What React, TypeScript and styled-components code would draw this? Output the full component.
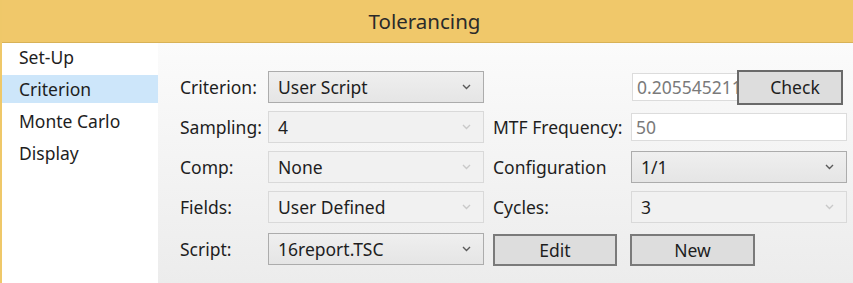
import styled, { createGlobalStyle } from 'styled-components'

const GlobalStyle = createGlobalStyle`
  html, body {
    margin: 0;
    padding: 0;
    background: #ffffff;
  }
  body {
    font-family: "Noto Sans", "Open Sans", sans-serif;
    color: #1e1e1e;
  }
`

const Window = styled.div`
  width: 853px;
  height: 283px;
  display: flex;
  flex-direction: column;
  overflow: hidden;
  border-left: 2px solid #efc869;
  box-sizing: border-box;
`

const TitleBar = styled.div`
  height: 42px;
  flex: none;
  display: flex;
  align-items: center;
  justify-content: center;
  background: #f0c86a;
  border-bottom: 1px solid #d8b257;
  font-size: 20.5px;
  color: #2a2a2a;
  padding-right: 6px;
`

const Body = styled.div`
  flex: 1;
  display: flex;
`

const Sidebar = styled.ul`
  width: 156px;
  flex: none;
  margin: 0;
  padding: 0;
  list-style: none;
  background: #ffffff;
`

const NavItem = styled.li<{ $active?: boolean }>`
  height: 28px;
  margin-bottom: 4px;
  padding-left: 17px;
  display: flex;
  align-items: center;
  font-size: 17.5px;
  background: ${p => (p.$active ? '#cde6fa' : 'transparent')};
`

const Panel = styled.div`
  flex: 1;
  background: linear-gradient(#fbfbfb, #ececec);
  padding: 28px 6px 0 22px;
`

const Form = styled.div`
  display: grid;
  grid-template-columns: 88px 216px 147px 216px;
  grid-template-rows: 32px 32px 32px 32px 35px;
  row-gap: 8px;
  align-items: center;
  & > :nth-child(4n + 3) {
    padding-left: 9px;
  }
`

const Label = styled.span`
  font-size: 17.5px;
  white-space: nowrap;
`

const Combo = styled.div<{ $disabled?: boolean }>`
  height: 32px;
  box-sizing: border-box;
  display: flex;
  align-items: center;
  justify-content: space-between;
  padding: 0 12px 0 9px;
  font-size: 17.5px;
  border: 1px solid ${p => (p.$disabled ? '#d9d9d9' : '#acacac')};
  background: ${p => (p.$disabled ? '#f1f1f1' : 'linear-gradient(#efefef, #e5e5e5)')};
  color: #1e1e1e;
`

const Chevron = ({ light }: { light?: boolean }) => (
  <svg width="9" height="6" viewBox="0 0 9 6">
    <path d="M1 1 L4.5 4.5 L8 1" fill="none" stroke={light ? '#c9c9c9' : '#5a5a5a'} strokeWidth="1.4" />
  </svg>
)

const TextBox = styled.div<{ $width?: number }>`
  height: 28px;
  width: ${p => (p.$width ? `${p.$width}px` : '100%')};
  flex: none;
  box-sizing: border-box;
  display: flex;
  align-items: center;
  padding-left: 4px;
  background: #ffffff;
  border: 1px solid #dcdcdc;
  color: #7a7a7a;
  font-size: 17.5px;
  overflow: hidden;
  white-space: nowrap;
`

const CheckRow = styled.div`
  display: flex;
  align-items: center;
  padding-left: 1px;
`

const Button = styled.button<{ $width: number }>`
  width: ${p => p.$width}px;
  height: 32px;
  box-sizing: border-box;
  border: 2px solid #7a7a7a;
  background: #dddddd;
  font-family: inherit;
  font-size: 17.5px;
  color: #1e1e1e;
  padding: 0;
`

const ButtonRow = styled.div`
  display: flex;
  gap: 13px;
  padding-left: 7px;
  margin-top: 2px;
  grid-column: 3 / span 2;
`

const CheckButton = styled(Button)`
  height: 35px;
  flex: none;
  margin-left: -3px;
  padding-left: 10px;
  border-color: #6a6a6a;
`

const sections = ['Set-Up', 'Criterion', 'Monte Carlo', 'Display']

export default function App() {
  return (
    <>
      <GlobalStyle />
      <Window>
        <TitleBar>Tolerancing</TitleBar>
        <Body>
          <Sidebar>
            {sections.map(s => (
              <NavItem key={s} $active={s === 'Criterion'}>{s}</NavItem>
            ))}
          </Sidebar>
          <Panel>
            <Form>
              <Label>Criterion:</Label>
              <Combo>User Script<Chevron /></Combo>
              <span />
              <CheckRow>
                <TextBox $width={108}>0.205545211</TextBox>
                <CheckButton $width={106}>Check</CheckButton>
              </CheckRow>

              <Label>Sampling:</Label>
              <Combo $disabled>4<Chevron light /></Combo>
              <Label>MTF Frequency:</Label>
              <TextBox>50</TextBox>

              <Label>Comp:</Label>
              <Combo $disabled>None<Chevron light /></Combo>
              <Label>Configuration</Label>
              <Combo>1/1<Chevron /></Combo>

              <Label>Fields:</Label>
              <Combo $disabled>User Defined<Chevron light /></Combo>
              <Label>Cycles:</Label>
              <Combo $disabled>3<Chevron light /></Combo>

              <Label>Script:</Label>
              <Combo>16report.TSC<Chevron /></Combo>
              <ButtonRow>
                <Button $width={124}>Edit</Button>
                <Button $width={125}>New</Button>
              </ButtonRow>
            </Form>
          </Panel>
        </Body>
      </Window>
    </>
  )
}
